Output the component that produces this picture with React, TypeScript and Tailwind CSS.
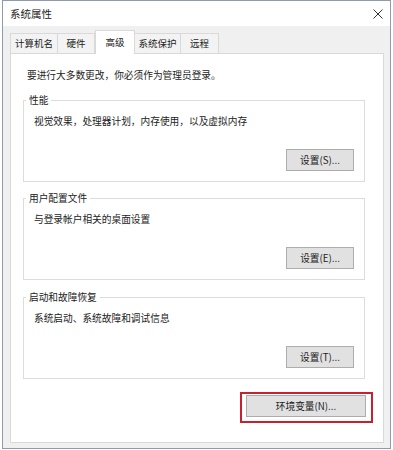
const font = { fontFamily: '"Noto Sans CJK SC", "Microsoft YaHei", sans-serif' };

function Group({ title, text, button, className }: { title: string; text: string; button: string; className: string }) {
  return (
    <fieldset className={`mr-[18px] ml-[12px] border border-[#dcdcdc] px-[10px] pb-[10px] ${className}`}>
      <legend className="ml-[-8px] px-[3px] text-[9.7px] leading-[14px] text-[#222]">{title}</legend>
      <div className="mt-[7px] text-[9.7px] leading-[14px] text-[#222]">{text}</div>
      <div className="mt-[21px] flex justify-end">
        <button className="flex h-[22px] w-[68px] items-center justify-center border border-[#adadad] bg-[#e1e1e1] text-[9.7px] text-[#222]">
          {button}
        </button>
      </div>
    </fieldset>
  );
}

export default function App() {
  const tabs = [
    { label: '计算机名', w: 'w-[48px]' },
    { label: '硬件', w: 'w-[38px]' },
    { label: '高级', w: 'w-[40px]', active: true },
    { label: '系统保护', w: 'w-[47px]' },
    { label: '远程', w: 'w-[39px]' },
  ];

  return (
    <div className="h-[450px] w-[393px] overflow-hidden bg-white" style={font}>
      <div className="ml-[2px] flex h-[449px] w-[389px] flex-col border border-[#8d9bad] bg-[#f0f0f0]">
        {/* title bar */}
        <div className="flex h-[25px] shrink-0 items-center justify-between bg-white pl-[7px] pr-[6px]">
          <span className="text-[10.5px] text-[#222]">系统属性</span>
          <svg width="10" height="10" viewBox="0 0 10 10" className="mr-[1px]">
            <path d="M0.5 0.5L9.5 9.5M9.5 0.5L0.5 9.5" stroke="#333" strokeWidth="1" />
          </svg>
        </div>

        {/* tabs */}
        <div className="mt-[4px] flex h-[23px] shrink-0 items-end pl-[7px]">
          {tabs.map((t) =>
            t.active ? (
              <div
                key={t.label}
                className={`relative z-10 -mb-px flex h-[24px] ${t.w} items-start justify-center border border-b-0 border-[#d9d9d9] bg-white pt-[4px] text-[9.5px] text-[#222]`}
              >
                {t.label}
              </div>
            ) : (
              <div
                key={t.label}
                className={`-ml-px flex h-[20px] ${t.w} items-center justify-center border border-b-0 border-[#d9d9d9] bg-[#f3f3f3] text-[9.5px] text-[#222] first:ml-0`}
              >
                {t.label}
              </div>
            )
          )}
        </div>

        {/* panel */}
        <div className="mb-[5px] ml-[7px] mr-[6px] flex flex-1 flex-col border border-[#d9d9d9] bg-white">
          <div className="ml-[16px] mt-[14px] text-[9.7px] leading-[14px] text-[#222]">
            要进行大多数更改，你必须作为管理员登录。
          </div>
          <Group className="mt-[11px]" title="性能" text="视觉效果，处理器计划，内存使用，以及虚拟内存" button="设置(S)..." />
          <Group className="mt-[9px]" title="用户配置文件" text="与登录帐户相关的桌面设置" button="设置(E)..." />
          <Group className="mt-[10px]" title="启动和故障恢复" text="系统启动、系统故障和调试信息" button="设置(T)..." />
          <div className="mr-[10px] mt-[13px] self-end border-2 border-[#c8202f] pb-[4px] pl-[4px] pr-[5px] pt-[1px]">
            <button className="flex h-[22px] w-[120px] items-center justify-center border border-[#adadad] bg-[#e1e1e1] text-[9.7px] text-[#222]">
              环境变量(N)...
            </button>
          </div>
        </div>
      </div>
    </div>
  );
}
